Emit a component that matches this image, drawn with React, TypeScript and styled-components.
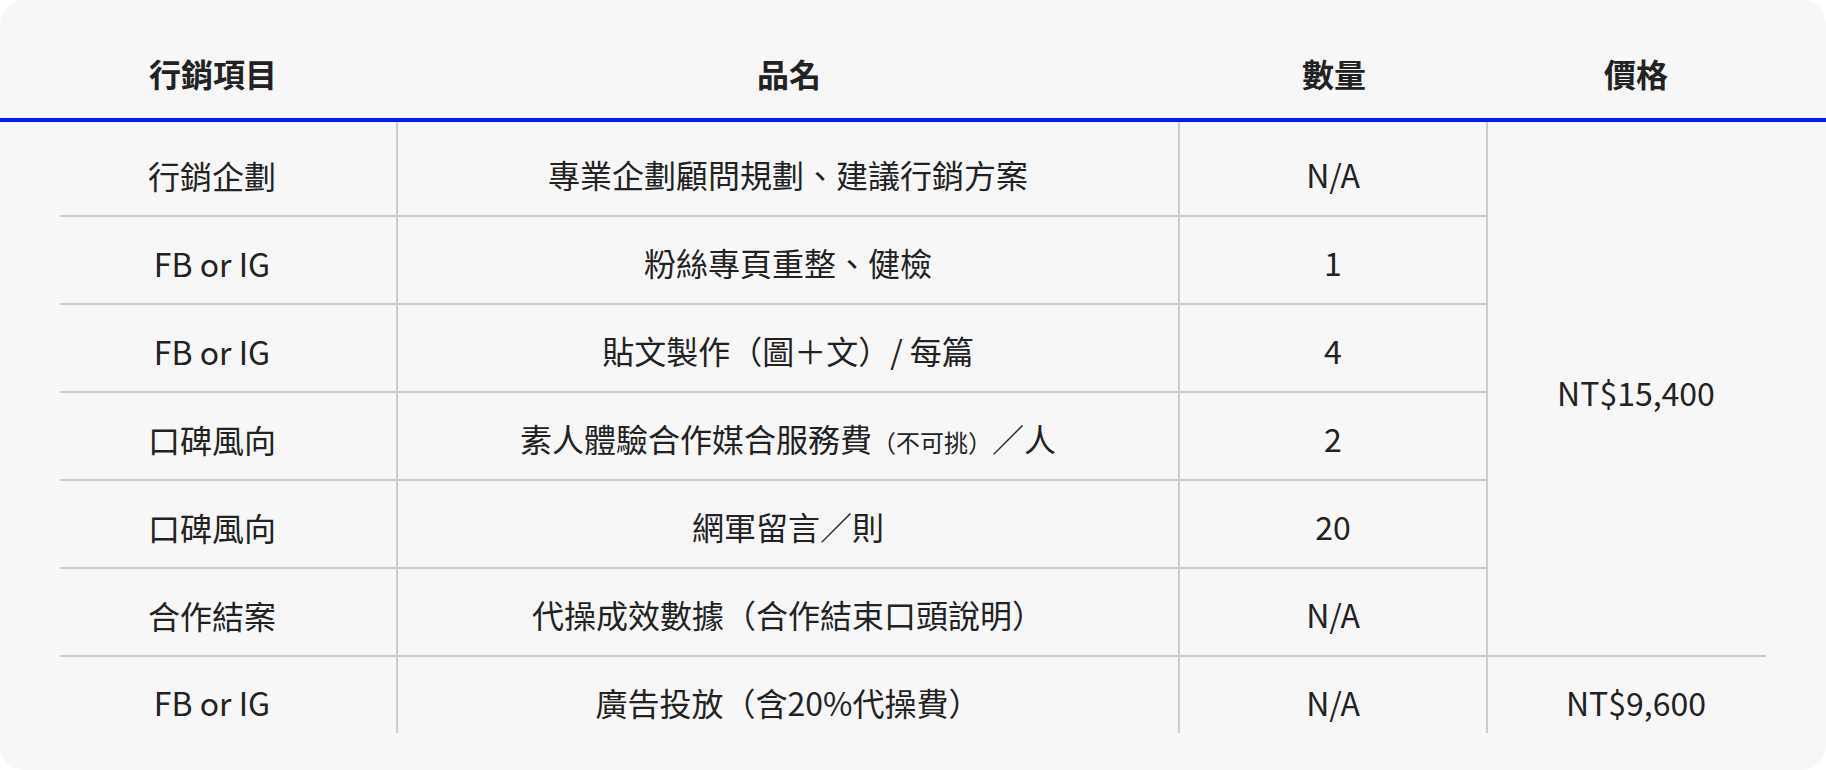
import React from "react";
import styled, { createGlobalStyle } from "styled-components";

const Global = createGlobalStyle`
  html, body {
    margin: 0;
    padding: 0;
    background: #ffffff;
  }
  body {
    font-family: "Noto Sans CJK TC", "Noto Sans", sans-serif;
  }
`;

const Card = styled.div`
  box-sizing: border-box;
  width: 1826px;
  background: #f7f7f7;
  border-radius: 24px;
  padding: 28px 0 37px;
`;

const Table = styled.table`
  width: 100%;
  table-layout: fixed;
  border-collapse: separate;
  border-spacing: 0;
  color: #222222;
  font-size: 32px;
  line-height: 46px;
`;

const Col = styled.col<{ $w: number }>`
  width: ${(p) => p.$w}px;
`;

const HeadCell = styled.th<{ $edge?: "first" | "last" }>`
  box-sizing: border-box;
  padding: 22px ${(p) => (p.$edge === "last" ? "42px" : "0")} 22px
    ${(p) => (p.$edge === "first" ? "28px" : "0")};
  font-weight: 700;
  text-align: center;
  border-bottom: 4px solid #001aff;
`;

const LINE = "#cccccc";

const Cell = styled.td<{
  $edge?: "first" | "last";
  $topRow?: boolean;
  $lastRow?: boolean;
  $divider?: boolean;
}>`
  box-sizing: border-box;
  height: ${(p) => (p.$topRow ? "95px" : p.$lastRow ? "76px" : "88px")};
  padding: ${(p) => (p.$topRow ? "29px" : "22px")}
    ${(p) => (p.$edge === "last" ? "42px" : "0")}
    ${(p) => (p.$lastRow ? "8px" : "18px")}
    ${(p) => (p.$edge === "first" ? "28px" : "0")};
  text-align: center;
  vertical-align: middle;
  white-space: nowrap;
  border-right: ${(p) => (p.$divider ? `2px solid ${LINE}` : "0")};
  ${(p) =>
    p.$lastRow
      ? ""
      : p.$edge === "first"
      ? `background: linear-gradient(${LINE}, ${LINE}) no-repeat right bottom / calc(100% - 60px) 2px;`
      : p.$edge === "last"
      ? `background: linear-gradient(${LINE}, ${LINE}) no-repeat left bottom / calc(100% - 60px) 2px;`
      : `border-bottom: 2px solid ${LINE};`}
`;

const Small = styled.span`
  font-size: 24px;
  line-height: 0;
`;

type Row = {
  item: string;
  name: React.ReactNode;
  qty: string;
};

const rows: Row[] = [
  { item: "行銷企劃", name: "專業企劃顧問規劃、建議行銷方案", qty: "N/A" },
  { item: "FB or IG", name: "粉絲專頁重整、健檢", qty: "1" },
  { item: "FB or IG", name: "貼文製作（圖＋文）/ 每篇", qty: "4" },
  {
    item: "口碑風向",
    name: (
      <>
        素人體驗合作媒合服務費<Small>（不可挑）</Small>／人
      </>
    ),
    qty: "2",
  },
  { item: "口碑風向", name: "網軍留言／則", qty: "20" },
  { item: "合作結案", name: "代操成效數據（合作結束口頭說明）", qty: "N/A" },
];

export default function App() {
  return (
    <>
      <Global />
      <Card>
        <Table>
          <colgroup>
            <Col $w={398} />
            <Col $w={782} />
            <Col $w={308} />
            <Col $w={338} />
          </colgroup>
          <thead>
            <tr>
              <HeadCell $edge="first">行銷項目</HeadCell>
              <HeadCell>品名</HeadCell>
              <HeadCell>數量</HeadCell>
              <HeadCell $edge="last">價格</HeadCell>
            </tr>
          </thead>
          <tbody>
            {rows.map((r, i) => (
              <tr key={i}>
                <Cell $edge="first" $topRow={i === 0} $divider>
                  {r.item}
                </Cell>
                <Cell $topRow={i === 0} $divider>
                  {r.name}
                </Cell>
                <Cell $topRow={i === 0} $divider>
                  {r.qty}
                </Cell>
                {i === 0 && (
                  <Cell $edge="last" rowSpan={rows.length}>
                    NT$15,400
                  </Cell>
                )}
              </tr>
            ))}
            <tr>
              <Cell $edge="first" $lastRow $divider>
                FB or IG
              </Cell>
              <Cell $lastRow $divider>
                廣告投放（含20%代操費）
              </Cell>
              <Cell $lastRow $divider>
                N/A
              </Cell>
              <Cell $edge="last" $lastRow>
                NT$9,600
              </Cell>
            </tr>
          </tbody>
        </Table>
      </Card>
    </>
  );
}
